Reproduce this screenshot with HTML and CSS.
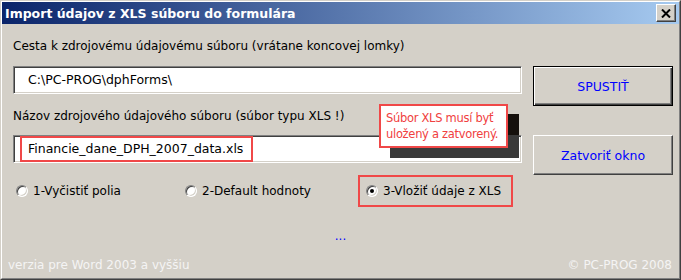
FILE: index.html
```html
<!DOCTYPE html>
<html lang="sk">
<head>
<meta charset="utf-8">
<title>Import údajov z XLS súboru do formulára</title>
<link rel="stylesheet" href="styles.css">
</head>
<body>
<div class="window">
  <div class="titlebar">
    <span class="title">Import údajov z XLS súboru do formulára</span>
    <span class="close">
      <svg width="10" height="9" viewBox="0 0 10 9"><path d="M1 0.5 L9 8.5 M9 0.5 L1 8.5" stroke="#000" stroke-width="2" fill="none"/></svg>
    </span>
  </div>
  <div class="content">
    <div class="top">
      <div class="left">
        <div class="label">Cesta k zdrojovému údajovému súboru (vrátane koncovej lomky)</div>
        <div class="field field-first"><span class="field-text">C:\PC-PROG\dphForms\</span></div>
        <div class="label label-second">Názov zdrojového údajového súboru (súbor typu XLS !)</div>
        <div class="field field-second"><span class="field-text highlight">Financie_dane_DPH_2007_data.xls</span></div>
        <div class="tip-shadow"></div>
        <div class="tooltip">Súbor XLS musí byť<br>uložený a zatvorený.</div>
      </div>
      <div class="right">
        <div class="button button-default">SPUSTIŤ</div>
        <div class="button button-close">Zatvoriť okno</div>
      </div>
    </div>
    <div class="options">
      <div class="option option-1"><span class="radio"></span><span>1-Vyčistiť polia</span></div>
      <div class="option option-2"><span class="radio"></span><span>2-Default hodnoty</span></div>
      <div class="option option-3"><span class="radio checked"></span><span>3-Vložiť údaje z XLS</span></div>
    </div>
    <div class="dots">...</div>
  </div>
  <div class="footer">
    <span>verzia pre Word 2003 a vyššiu</span>
    <span>© PC-PROG 2008</span>
  </div>
</div>
</body>
</html>
```
FILE: styles.css
```css
html, body {
  margin: 0;
  padding: 0;
  background: #d4d0c8;
}
body {
  font-family: "DejaVu Sans", sans-serif;
  font-size: 12px;
  color: #000;
}
.window {
  width: 681px;
  height: 280px;
  box-sizing: border-box;
  border: 1px solid;
  border-color: #d4d0c8 #404040 #404040 #d4d0c8;
  background: #d4d0c8;
  position: relative;
}
.window::before {
  content: "";
  position: absolute;
  inset: 0;
  border: 1px solid;
  border-color: #fff #808080 #808080 #fff;
  pointer-events: none;
}
.titlebar {
  margin: 1px 1px 0 1px;
  height: 22px;
  background: linear-gradient(to right, #0a246a, #a6caf0);
  display: flex;
  align-items: center;
  justify-content: space-between;
  padding: 0 3px 0 3px;
}
.title {
  color: #fff;
  font-weight: bold;
  font-size: 12.5px;
}
.close {
  width: 20px;
  height: 18px;
  box-sizing: border-box;
  background: #d4d0c8;
  border: 1px solid;
  border-color: #fff #404040 #404040 #fff;
  box-shadow: inset -1px -1px 0 #808080;
  display: flex;
  align-items: center;
  justify-content: center;
}
.close svg { display: block; }
.content {
  padding: 14px 6px 0 12px;
}
.top {
  display: flex;
  gap: 11px;
}
.left {
  width: 509px;
  position: relative;
  display: flex;
  flex-direction: column;
}
.label {
  line-height: 16px;
  height: 16px;
}
.field {
  margin-top: 12px;
  height: 28px;
  box-sizing: border-box;
  background: #fff;
  border: 1px solid;
  border-color: #808080 #fff #fff #808080;
  box-shadow: inset 1px 1px 0 #404040, inset -1px -1px 0 #d4d0c8;
  display: flex;
  align-items: center;
  padding-left: 6px;
}
.field-text {
  border: 2px solid transparent;
  padding: 0 8px 0 6px;
  height: 26px;
  box-sizing: border-box;
  line-height: 22px;
  font-size: 12.5px;
}
.highlight {
  border-color: #f04848;
}
.label-second {
  margin-top: 14px;
}
.field-second {
  margin-top: 11px;
}
.tooltip {
  position: absolute;
  left: 366px;
  top: 66px;
  width: 129px;
  height: 44px;
  box-sizing: border-box;
  background: #fff;
  border: 2px solid #f04848;
  color: #f04040;
  line-height: 16px;
  padding: 4px 0 0 5px;
  white-space: nowrap;
  font-size: 11.5px;
  letter-spacing: -0.3px;
  z-index: 2;
}
.tip-shadow {
  position: absolute;
  left: 377px;
  top: 76px;
  width: 129px;
  height: 44px;
  background: linear-gradient(to bottom, #15100c 0 21px, #3a3a3a 21px);
  z-index: 1;
}
.right {
  width: 140px;
  display: flex;
  flex-direction: column;
}
.button {
  height: 40px;
  box-sizing: border-box;
  display: flex;
  align-items: center;
  justify-content: center;
  color: #0000ff;
  font-size: 12.5px;
  background: #d4d0c8;
}
.button-default {
  margin-top: 28px;
  border: 1px solid #000;
  box-shadow: inset 1px 1px 0 #fff, inset -1px -1px 0 #404040, inset -2px -2px 0 #808080;
}
.button-close {
  margin-top: 29px;
  border: 1px solid;
  border-color: #fff #404040 #404040 #fff;
  box-shadow: inset -1px -1px 0 #808080;
}
.options {
  display: flex;
  align-items: center;
  height: 32px;
}
.option {
  display: flex;
  align-items: center;
  gap: 5px;
  box-sizing: border-box;
  height: 32px;
}
.option-1 {
  width: 169px;
  margin-left: 3px;
}
.option-2 {
  width: 173px;
}
.option-3 {
  width: 155px;
  border: 2px solid #f04848;
  padding-left: 6px;
}
.radio {
  width: 12px;
  height: 12px;
  box-sizing: border-box;
  border-radius: 50%;
  border: 1px solid;
  border-color: #808080 #fff #fff #808080;
  background: #fff;
  box-shadow: inset 1px 1px 0 #404040, inset -1px -1px 0 #d4d0c8;
  position: relative;
  flex: none;
}
.radio.checked::after {
  content: "";
  position: absolute;
  left: 3px;
  top: 3px;
  width: 4px;
  height: 4px;
  border-radius: 50%;
  background: #000;
}
.dots {
  margin-top: 21px;
  text-align: center;
  color: #0000ff;
  line-height: 16px;
  padding-right: 6px;
}
.footer {
  position: absolute;
  left: 1px;
  right: 1px;
  bottom: 6px;
  display: flex;
  justify-content: space-between;
  padding: 0 7px 0 6px;
  color: #f4f4f4;
  line-height: 16px;
}
```
